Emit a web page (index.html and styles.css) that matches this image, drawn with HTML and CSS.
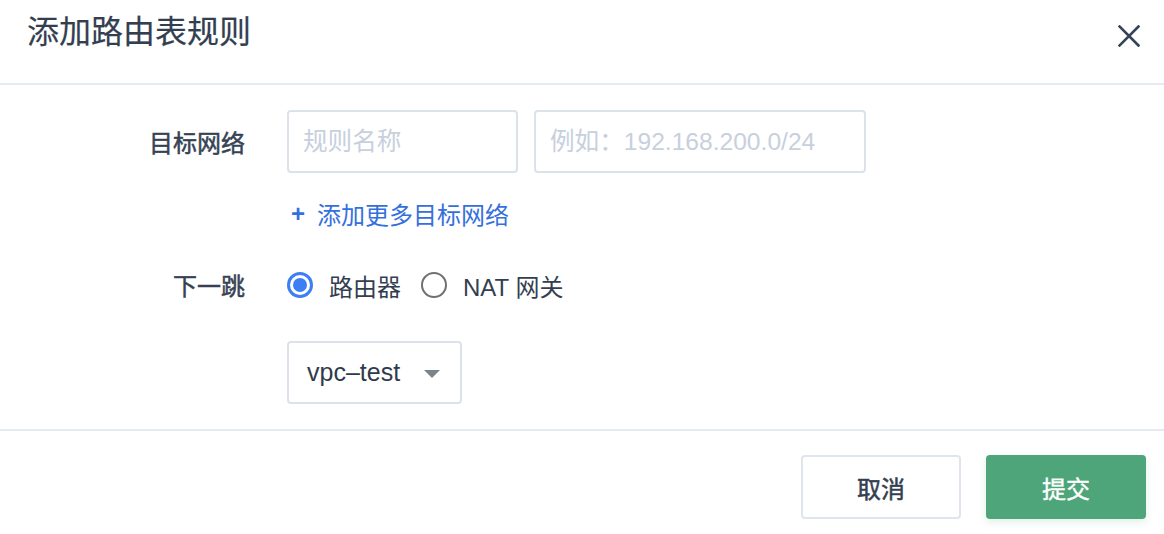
FILE: index.html
```html
<!DOCTYPE html>
<html lang="zh-CN">
<head>
<meta charset="utf-8">
<title>添加路由表规则</title>
<link rel="stylesheet" href="styles.css">
</head>
<body>
<div class="dialog">
  <header class="dialog-header">
    <h1 class="dialog-title">添加路由表规则</h1>
    <button class="close-btn" aria-label="关闭">
      <svg width="22" height="22" viewBox="0 0 22 22"><path d="M1.5 1.5 L20.5 20.5 M20.5 1.5 L1.5 20.5" stroke="#35445a" stroke-width="2.6" stroke-linecap="square" fill="none"/></svg>
    </button>
  </header>
  <main class="dialog-body">
    <div class="form-row">
      <label class="form-label">目标网络</label>
      <div class="form-control">
        <div class="inputs">
          <input class="input input-name" type="text" placeholder="规则名称">
          <input class="input input-cidr" type="text" placeholder="例如：192.168.200.0/24">
        </div>
        <a class="add-link" href="#"><span class="plus">+</span>添加更多目标网络</a>
      </div>
    </div>
    <div class="form-row row-hop">
      <label class="form-label">下一跳</label>
      <div class="form-control">
        <div class="radios">
          <span class="radio checked"><span class="radio-circle"></span>路由器</span>
          <span class="radio"><span class="radio-circle"></span>NAT 网关</span>
        </div>
        <div class="select">
          <span class="select-value">vpc–test</span>
          <span class="select-arrow"></span>
        </div>
      </div>
    </div>
  </main>
  <footer class="dialog-footer">
    <button class="btn btn-cancel">取消</button>
    <button class="btn btn-submit">提交</button>
  </footer>
</div>
</body>
</html>
```

FILE: styles.css
```css
* { box-sizing: border-box; }
html, body {
  margin: 0;
  padding: 0;
  background: #ffffff;
}
body {
  width: 1164px;
  height: 534px;
  overflow: hidden;
  font-family: "Liberation Sans", "Noto Sans CJK SC", sans-serif;
  color: #323e50;
}
.dialog {
  display: flex;
  flex-direction: column;
  height: 534px;
}
.dialog-header {
  display: flex;
  justify-content: space-between;
  align-items: flex-start;
  height: 85px;
  padding: 0 24px 0 27px;
  border-bottom: 2px solid #e6eaf1;
}
.dialog-title {
  margin: 0;
  font-family: "Noto Sans CJK SC", sans-serif;
  font-size: 32px;
  font-weight: 400;
  line-height: 58px;
  color: #333f51;
  -webkit-text-stroke: 0.2px #333f51;
}
.close-btn {
  margin-top: 25px;
  padding: 0;
  border: 0;
  background: none;
  width: 22px;
  height: 22px;
  display: block;
}
.close-btn svg { display: block; }

.dialog-body {
  padding-top: 25px;
  height: 346px;
  border-bottom: 2px solid #e6eaf1;
}
.form-row {
  display: grid;
  grid-template-columns: 245px 1fr;
  column-gap: 42px;
}
.form-label {
  text-align: right;
  font-family: "Noto Sans CJK SC", sans-serif;
  font-size: 24px;
  font-weight: 400;
  color: #364254;
  -webkit-text-stroke: 0.5px #364254;
  line-height: 63px;
}
.inputs {
  display: flex;
  gap: 16px;
}
.input {
  height: 63px;
  border: 2px solid #dbe2eb;
  border-radius: 4px;
  padding: 0 14px;
  font-family: "Liberation Sans", "Noto Sans CJK SC", sans-serif;
  font-size: 24.6px;
  color: #323e50;
  outline: none;
}
.input::placeholder { color: #c7d0dd; }
.input-name { width: 231px; }
.input-cidr { width: 332px; }
.add-link {
  display: inline-flex;
  align-items: center;
  margin-top: 26px;
  line-height: 30px;
  font-family: "Noto Sans CJK SC", sans-serif;
  font-size: 24px;
  color: #3470dc;
  text-decoration: none;
}
.plus {
  font-family: "Liberation Sans", sans-serif;
  font-weight: 700;
  font-size: 24px;
  margin: 0 12px 0 4px;
}
.row-hop {
  margin-top: 41px;
}
.row-hop .form-label {
  line-height: 30px;
}
.radios {
  display: flex;
  align-items: center;
  gap: 20px;
  height: 30px;
}
.radio {
  display: inline-flex;
  align-items: center;
  font-family: "Liberation Sans", "Noto Sans CJK SC", sans-serif;
  font-size: 24px;
  color: #333f51;
}
.radio-circle {
  width: 26px;
  height: 26px;
  border: 2px solid #707070;
  border-radius: 50%;
  margin-right: 16px;
  display: inline-block;
  position: relative;
}
.radio.checked .radio-circle {
  border: 3px solid #3d7ef5;
}
.radio.checked .radio-circle::after {
  content: "";
  position: absolute;
  left: 3px;
  top: 3px;
  width: 14px;
  height: 14px;
  border-radius: 50%;
  background: #3d7ef5;
}
.select {
  margin-top: 41px;
  width: 175px;
  height: 63px;
  border: 2px solid #dbe2eb;
  border-radius: 4px;
  display: flex;
  align-items: center;
  justify-content: space-between;
  padding: 0 20px 0 18px;
}
.select-value {
  font-size: 25px;
  color: #2f3b4c;
}
.select-arrow {
  width: 0;
  height: 0;
  border-left: 8px solid transparent;
  border-right: 8px solid transparent;
  border-top: 8px solid #7b838f;
  margin-top: 2px;
}
.dialog-footer {
  display: flex;
  justify-content: flex-end;
  gap: 25px;
  padding: 24px 18px 0 0;
}
.btn {
  width: 160px;
  height: 64px;
  border-radius: 4px;
  font-family: "Noto Sans CJK SC", sans-serif;
  font-size: 24px;
  font-weight: 400;
  cursor: pointer;
}
.btn-cancel {
  background: #ffffff;
  border: 2px solid #dfe5ee;
  color: #333f51;
  -webkit-text-stroke: 0.5px #333f51;
}
.btn-submit {
  background: #4ea57a;
  border: 0;
  color: #ffffff;
  -webkit-text-stroke: 0.4px #ffffff;
  box-shadow: 0 3px 8px rgba(78, 165, 122, 0.18);
}
```
